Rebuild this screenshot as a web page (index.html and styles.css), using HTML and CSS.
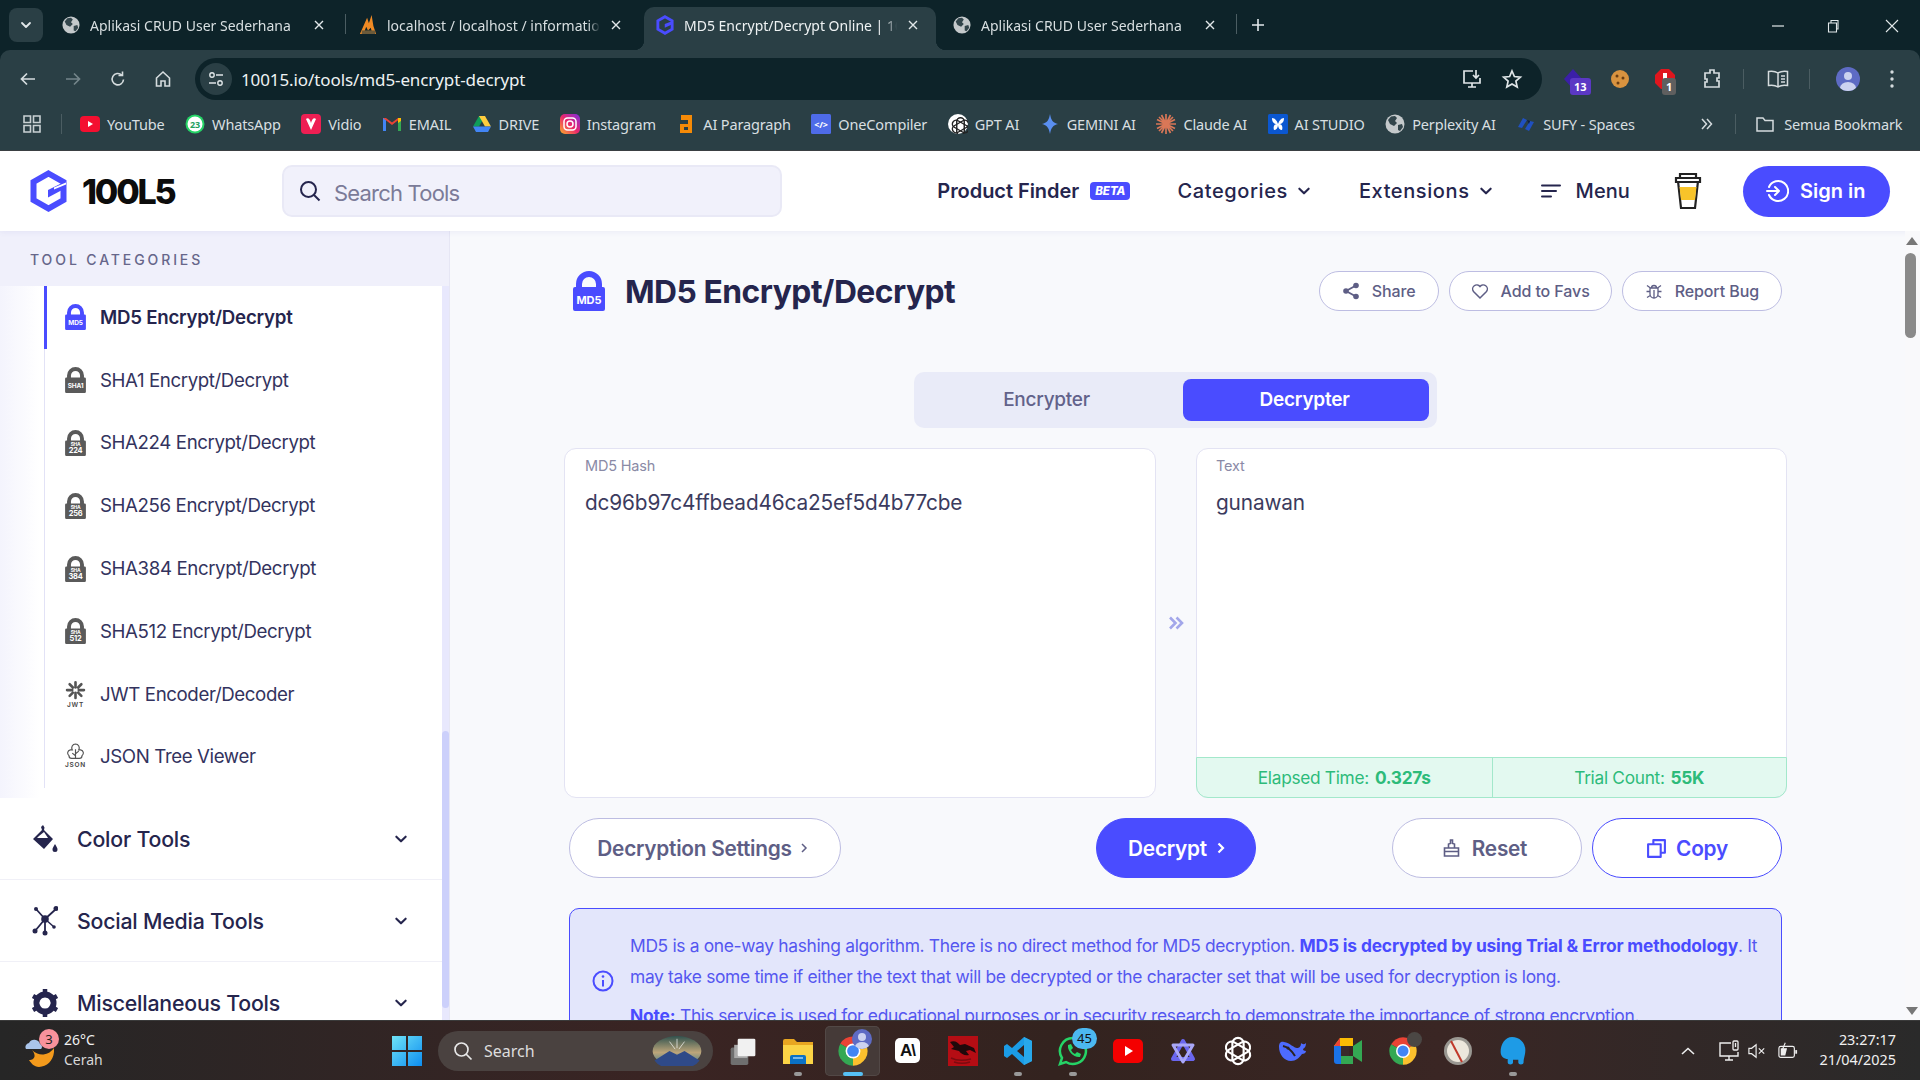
FILE: index.html
```html
<!DOCTYPE html>
<html lang="en">
<head>
<meta charset="utf-8">
<title>MD5 Encrypt/Decrypt Online</title>
<link rel="stylesheet" href="styles.css">
</head>
<body>
<svg class="defs" aria-hidden="true">
  <symbol id="globe" viewBox="0 0 20 20"><circle cx="10" cy="10" r="9.5" fill="#c4c9cb"/><path d="M6 2.5 L10 2 12 4 10 7 12 9 9 12 5 10 3 6z M13 11l4-1 1 3-3 4-2-1z" fill="#32454b"/></symbol>
  <symbol id="chrome" viewBox="0 0 24 24"><path d="M12 12L2.5 6.5A11 11 0 0 1 21.5 6.5z" fill="#ea4335"/><path d="M12 12L21.5 6.5A11 11 0 0 1 12 23z" fill="#fbc02d"/><path d="M12 12L12 23A11 11 0 0 1 2.5 6.5z" fill="#34a853"/><circle cx="12" cy="12" r="5.6" fill="#fff"/><circle cx="12" cy="12" r="4.4" fill="#4285f4"/></symbol>
  <symbol id="knot" viewBox="0 0 24 24"><g fill="none" stroke="currentColor" stroke-width="1.7"><rect x="7.5" y="1.5" width="9" height="21" rx="4.5"/><rect x="7.5" y="1.5" width="9" height="21" rx="4.5" transform="rotate(60 12 12)"/><rect x="7.5" y="1.5" width="9" height="21" rx="4.5" transform="rotate(120 12 12)"/></g></symbol>
  <symbol id="lock" viewBox="0 0 32 40"><path fill-rule="evenodd" d="M0 18V38a2 2 0 0 0 2 2H30a2 2 0 0 0 2-2V18a2 2 0 0 0-2-2H29V13a13 13 0 0 0-26 0V16H2a2 2 0 0 0-2 2zM9 16V13a7 7 0 0 1 14 0V16z"/></symbol>
  <symbol id="chev" viewBox="0 0 12 12"><path d="M2 4l4 4 4-4" fill="none" stroke="currentColor" stroke-width="1.8" stroke-linecap="round" stroke-linejoin="round"/></symbol>
  <symbol id="close" viewBox="0 0 12 12"><path d="M2 2l8 8M10 2l-8 8" fill="none" stroke="currentColor" stroke-width="1.4"/></symbol>
</svg>

<header class="tabstrip">
  <button class="tab-list"><svg class="i12"><use href="#chev"/></svg></button>
  <div class="tab sep"><svg class="fav"><use href="#globe"/></svg><span class="tab-title">Aplikasi CRUD User Sederhana</span><svg class="tab-x"><use href="#close"/></svg></div>
  <div class="tab"><svg class="fav" viewBox="0 0 20 22"><path d="M1 21L9 3l2 6 3-9 2 12 3 9h-4l-2-7-3 3-2-4-3 8z" fill="#f08a24"/><path d="M3 21h15v-4H3z" fill="#6b5a3a"/></svg><span class="tab-title">localhost / localhost / information_schema</span><svg class="tab-x"><use href="#close"/></svg></div>
  <div class="tab active"><svg class="fav" viewBox="0 0 37 42"><path fill="none" stroke="#4a4cff" stroke-width="6" d="M18.5 3.5L33.5 12V30L18.5 38.5 3.5 30V12z"/><path d="M18 19l15-6v7l-15 7z" fill="#4a4cff"/></svg><span class="tab-title">MD5 Encrypt/Decrypt Online | 10015 Tools</span><svg class="tab-x"><use href="#close"/></svg></div>
  <div class="tab sep"><svg class="fav"><use href="#globe"/></svg><span class="tab-title">Aplikasi CRUD User Sederhana</span><svg class="tab-x"><use href="#close"/></svg></div>
  <svg class="new-tab" viewBox="0 0 16 16"><path d="M8 2v12M2 8h12" stroke="#e2e8ea" stroke-width="1.6"/></svg>
  <div class="win-controls">
    <svg viewBox="0 0 14 14"><path d="M1 7h12" stroke="#e2e8ea" stroke-width="1.2"/></svg>
    <svg viewBox="0 0 14 14"><path d="M2.5 4h8v9h-8zM5 4V1.5h7V10h-1.5" fill="none" stroke="#e2e8ea" stroke-width="1.1"/></svg>
    <svg viewBox="0 0 14 14"><path d="M1 1l12 12M13 1L1 13" stroke="#e2e8ea" stroke-width="1.1"/></svg>
  </div>
</header>

<nav class="toolbar">
  <svg class="tb-ic" viewBox="0 0 20 20"><path d="M17 10H4M9 4.5L3.5 10 9 15.5" fill="none" stroke="#d5dcde" stroke-width="1.7"/></svg>
  <svg class="tb-ic" viewBox="0 0 20 20"><path d="M3 10h13M11 4.5l5.5 5.5-5.5 5.5" fill="none" stroke="#74858a" stroke-width="1.7"/></svg>
  <svg class="tb-ic" viewBox="0 0 20 20"><path d="M15.5 10.5a5.7 5.7 0 1 1-1.8-4.5M14.5 2.5v4h-4" fill="none" stroke="#d5dcde" stroke-width="1.6"/></svg>
  <svg class="tb-ic" viewBox="0 0 20 20"><path d="M3.5 9L10 3l6.5 6v8h-4.5v-5h-4v5H3.5z" fill="none" stroke="#d5dcde" stroke-width="1.6"/></svg>
  <div class="omnibox">
    <span class="site-info"><svg viewBox="0 0 18 18"><circle cx="5" cy="5" r="2.2" fill="none" stroke="#dfe5e7" stroke-width="1.4"/><path d="M9 5h7M2 13h7" stroke="#dfe5e7" stroke-width="1.4"/><circle cx="13" cy="13" r="2.2" fill="none" stroke="#dfe5e7" stroke-width="1.4"/></svg></span>
    <span class="url">10015.io/tools/md5-encrypt-decrypt</span>
    <svg class="omni-ic" viewBox="0 0 22 22"><path d="M12 3H3v12h16V10M7 19h8M11 15v4M15 2v8M12 7l3 3 3-3" fill="none" stroke="#dfe5e7" stroke-width="1.7"/></svg>
    <svg class="omni-ic" viewBox="0 0 22 22"><path d="M11 3l2.4 5.5 6 .6-4.5 4 1.3 5.9-5.2-3.1-5.2 3.1 1.3-5.9-4.5-4 6-.6z" fill="none" stroke="#dfe5e7" stroke-width="1.7"/></svg>
  </div>
  <div class="ext ext-a"><svg viewBox="0 0 24 24"><path d="M12 2l9 10-9 10-9-10z" fill="#3b1fa8"/></svg><b class="ext-badge purple">13</b></div>
  <div class="ext ext-b"><svg viewBox="0 0 24 24"><circle cx="12" cy="12" r="9" fill="#d9933f"/><circle cx="9" cy="9" r="1.5" fill="#6b3e12"/><circle cx="15" cy="11" r="1.5" fill="#6b3e12"/><circle cx="10" cy="16" r="1.5" fill="#6b3e12"/></svg></div>
  <div class="ext ext-c"><svg viewBox="0 0 24 24"><path d="M8 2h8l6 6v8l-6 6H8l-6-6V8z" fill="#e0161e"/><path d="M10 6h4v11h-4z" fill="#fff"/></svg><b class="ext-badge grey">1</b></div>
  <div class="ext ext-d"><svg viewBox="0 0 24 24"><path d="M5 6h5V3h4v3h5v5h-2v3h2v6H5v-5h2v-3H5z" fill="none" stroke="#d5dcde" stroke-width="1.7"/></svg></div>
  <i class="tb-sep"></i>
  <div class="ext ext-e"><svg viewBox="0 0 24 24"><path d="M12 6C9 4 6 4 2.5 4.5v14c3.5-.5 6.5-.5 9.5 1.5 3-2 6-2 9.5-1.5v-14C18 4 15 4 12 6zM12 6v14M15 9h4M15 12h4M15 15h4" fill="none" stroke="#d5dcde" stroke-width="1.5"/></svg></div>
  <i class="tb-sep"></i>
  <span class="avatar"><i class="av-head"></i><i class="av-body"></i></span>
  <svg class="kebab" viewBox="0 0 4 18"><circle cx="2" cy="2" r="1.7" fill="#d5dcde"/><circle cx="2" cy="9" r="1.7" fill="#d5dcde"/><circle cx="2" cy="16" r="1.7" fill="#d5dcde"/></svg>
</nav>

<div class="bookmarks">
  <svg class="apps" viewBox="0 0 18 18"><path d="M1 1h6.5v6.5H1zM10.5 1H17v6.5h-6.5zM1 10.5h6.5V17H1zM10.5 10.5H17V17h-6.5z" fill="none" stroke="#c9d1d3" stroke-width="1.6"/></svg>
  <i class="bm-sep"></i>
  <a class="bm"><svg viewBox="0 0 20 20"><rect y="2" width="20" height="16" rx="4" fill="#f40f30"/><path d="M8 7l5 3-5 3z" fill="#fff"/></svg>YouTube</a>
  <a class="bm"><svg viewBox="0 0 20 20"><circle cx="10" cy="10" r="9.5" fill="#25d366"/><circle cx="10" cy="10" r="7.5" fill="#fff"/><text x="10" y="13.5" class="fav-text green">23</text></svg>WhatsApp</a>
  <a class="bm"><svg viewBox="0 0 20 20"><rect y="0" width="20" height="20" rx="4" fill="#ee1f53"/><path d="M5 5l5 11 5-11c-2-2-4 0-5 4-1-4-3-6-5-4z" fill="#fff"/></svg>Vidio</a>
  <a class="bm"><svg viewBox="0 0 20 20"><path d="M1 4h3v13H1z" fill="#4285f4"/><path d="M16 4h3v13h-3z" fill="#34a853"/><path d="M1 4l9 7 9-7-3 0-6 4.5L4 4z" fill="#ea4335"/><path d="M16 4h3v3l-3 2z" fill="#fbbc04"/></svg>EMAIL</a>
  <a class="bm"><svg viewBox="0 0 20 20"><path d="M7 2h6l-6 10.5H1z" fill="#0f9d58"/><path d="M7 2h6l6 10.5h-6z" fill="#ffcd3e"/><path d="M1 12.5h18L16 18H4z" fill="#4285f4"/></svg>DRIVE</a>
  <a class="bm"><svg viewBox="0 0 20 20"><defs><linearGradient id="ig" x1="0" y1="1" x2="1" y2="0"><stop offset="0" stop-color="#fdb02a"/><stop offset=".5" stop-color="#e9266d"/><stop offset="1" stop-color="#7d2fe0"/></linearGradient></defs><rect width="20" height="20" rx="5" fill="url(#ig)"/><rect x="4" y="4" width="12" height="12" rx="3.5" fill="none" stroke="#fff" stroke-width="1.5"/><circle cx="10" cy="10" r="3" fill="none" stroke="#fff" stroke-width="1.5"/></svg>Instagram</a>
  <a class="bm"><svg viewBox="0 0 20 20"><path d="M5 1h11v18H4v-9h8V6H5zM8 13v3h4v-3z" fill="#f58a07" fill-rule="evenodd"/></svg>AI Paragraph</a>
  <a class="bm"><svg viewBox="0 0 20 20"><rect width="20" height="20" rx="1.5" fill="#4e6be8"/><text x="10" y="14" class="fav-text white">&lt;/&gt;</text></svg>OneCompiler</a>
  <a class="bm"><svg viewBox="0 0 20 20"><circle cx="10" cy="10" r="10" fill="#fff"/><svg x="2.5" y="2.5" width="15" height="15" class="ink"><use href="#knot"/></svg></svg>GPT AI</a>
  <a class="bm"><svg viewBox="0 0 20 20"><path d="M10 0c1 6 3 9 8 10-5 1-7 4-8 10-1-6-3-9-8-10 5-1 7-4 8-10z" fill="#5a8ff0"/></svg>GEMINI AI</a>
  <a class="bm"><svg viewBox="0 0 20 20"><path d="M10 0v20M0 10h20M3 3l14 14M17 3L3 17M5.5 1l9 18M14.5 1l-9 18M1 5.5l18 9M19 5.5l-18 9" stroke="#d97757" stroke-width="1.7"/></svg>Claude AI</a>
  <a class="bm"><svg viewBox="0 0 20 20"><rect width="20" height="20" rx="1.5" fill="#0b57d0"/><path d="M4 4c3 0 5 3 6 6 1-3 3-6 6-6 0 4-2 6-5 6 3 0 4 3 3 6-2 0-4-2-4-5 0 3-2 5-4 5-1-3 0-6 3-6-3 0-5-2-5-6z" fill="#fff"/></svg>AI STUDIO</a>
  <a class="bm"><svg><use href="#globe"/></svg>Perplexity AI</a>
  <a class="bm"><svg viewBox="0 0 20 20"><path d="M2 13l5-9 4 2-5 8zM18 8l-5 9-4-2 5-8z" fill="#2050c0"/><path d="M11 6l3 1-1 3z" fill="#0d1d46"/></svg>SUFY - Spaces</a>
  <svg class="bm-more" viewBox="0 0 14 14"><path d="M3 2l4.5 5L3 12M8 2l4.5 5L8 12" fill="none" stroke="#d5dcde" stroke-width="1.5"/></svg>
  <i class="bm-sep right"></i>
  <a class="bm all"><svg viewBox="0 0 20 20"><path d="M2 4h6l2 2.5h8V17H2z" fill="none" stroke="#d5dcde" stroke-width="1.5"/></svg>Semua Bookmark</a>
</div>

<div class="site">
  <header class="site-header">
    <a class="logo"><svg viewBox="0 0 37 42"><path fill="none" stroke="#4a4cff" stroke-width="6" d="M18.5 3.5L33.5 12V30L18.5 38.5 3.5 30V12z"/><path d="M18 20l13-6.5 2 6-15 8z" fill="#4a4cff"/><path d="M24 17.5l12-5v2l-12 5z" fill="#fff"/></svg><span>100L5</span></a>
    <label class="search"><svg viewBox="0 0 22 22"><circle cx="9.5" cy="9.5" r="7.5" fill="none" stroke="#25254d" stroke-width="2"/><path d="M15 15l5.5 5.5" stroke="#25254d" stroke-width="2"/></svg><span>Search Tools</span></label>
    <div class="nav">
      <a class="nav-link tight">Product Finder <b class="beta">BETA</b></a>
      <a class="nav-link">Categories <svg class="i14"><use href="#chev"/></svg></a>
      <a class="nav-link">Extensions <svg class="i14"><use href="#chev"/></svg></a>
      <a class="nav-link menu"><svg class="menu-ic" viewBox="0 0 20 14"><path d="M1 1.5h18M1 7h14M1 12.5h9" stroke="#25254d" stroke-width="2" stroke-linecap="round"/></svg>Menu</a>
      <svg class="cup" viewBox="0 0 28 36"><path d="M4 8h20l-3 27H7z" fill="#fff" stroke="#222" stroke-width="2.2"/><path d="M5.5 14h17l-1.5 13H7z" fill="#f8c42a"/><path d="M2 5h24v4H2zM6 1h16v4H6z" fill="#fff" stroke="#222" stroke-width="2.2"/></svg>
      <a class="signin"><svg viewBox="0 0 24 24"><path d="M4 8a10 10 0 1 1 0 8M2 12h12M10 8l4 4-4 4" fill="none" stroke="#fff" stroke-width="2" stroke-linecap="round" stroke-linejoin="round"/></svg>Sign in</a>
    </div>
  </header>

  <div class="site-body">
    <aside class="sidebar">
      <div class="side-head">TOOL CATEGORIES</div>
      <div class="side-body">
        <div class="side-col">
          <ul class="tool-list">
            <li class="tool active"><svg class="lock blue" viewBox="0 0 32 40"><use href="#lock"/><text x="16" y="33" class="lk lk-one">MD5</text></svg>MD5 Encrypt/Decrypt</li>
            <li class="tool"><svg class="lock" viewBox="0 0 32 40"><use href="#lock"/><text x="16" y="33" class="lk lk-one">SHA1</text></svg>SHA1 Encrypt/Decrypt</li>
            <li class="tool"><svg class="lock" viewBox="0 0 32 40"><use href="#lock"/><text x="16" y="25" class="lk lk-sm">SHA</text><text x="16" y="36" class="lk lk-num">224</text></svg>SHA224 Encrypt/Decrypt</li>
            <li class="tool"><svg class="lock" viewBox="0 0 32 40"><use href="#lock"/><text x="16" y="25" class="lk lk-sm">SHA</text><text x="16" y="36" class="lk lk-num">256</text></svg>SHA256 Encrypt/Decrypt</li>
            <li class="tool"><svg class="lock" viewBox="0 0 32 40"><use href="#lock"/><text x="16" y="25" class="lk lk-sm">SHA</text><text x="16" y="36" class="lk lk-num">384</text></svg>SHA384 Encrypt/Decrypt</li>
            <li class="tool"><svg class="lock" viewBox="0 0 32 40"><use href="#lock"/><text x="16" y="25" class="lk lk-sm">SHA</text><text x="16" y="36" class="lk lk-num">512</text></svg>SHA512 Encrypt/Decrypt</li>
            <li class="tool"><svg class="lock" viewBox="0 0 32 40"><g stroke="#555" stroke-width="4" stroke-linecap="round"><path d="M16 2v8M16 18v8M3 14h8M21 14h8M7 5l5 5M20 18l5 5M25 5l-5 5M12 18l-5 5"/></g><text x="16" y="40" class="lk-jwt">JWT</text></svg>JWT Encoder/Decoder</li>
            <li class="tool"><svg class="lock" viewBox="0 0 32 40"><path d="M16 0a6 6 0 0 1 5 9h3a5 5 0 0 1 2 9 4 4 0 0 1-4 4H10a4 4 0 0 1-4-4 5 5 0 0 1 2-9h3a6 6 0 0 1 5-9zM16 8v14M16 15l5-4M16 18l-5-4" fill="none" stroke="#555" stroke-width="1.8"/><text x="16" y="36" class="lk-jwt">JSON</text></svg>JSON Tree Viewer</li>
          </ul>
          <div class="cat"><svg viewBox="0 0 26 30"><path d="M11 1l1.5 2.5L12 6l9 9-9 10-11-10 9-9-1-3z" fill="#25254d"/><path d="M5 14h14l-3 0-4-6-5 4z" fill="#fff"/><path d="M23 20c1.5 2.5 2.5 4 2.5 5.5a2.5 2.5 0 0 1-5 0c0-1.5 1-3 2.5-5.5z" fill="#25254d"/></svg><span>Color Tools</span><svg class="i14"><use href="#chev"/></svg></div>
          <div class="cat"><svg viewBox="0 0 26 30"><g stroke="#25254d" stroke-width="1.8"><path d="M13 13L4 3M13 13L24 3M13 13L3 25M13 13L13 26"/></g><circle cx="13" cy="13" r="3.8" fill="#25254d"/><circle cx="4" cy="3" r="2" fill="#25254d"/><circle cx="24" cy="2.5" r="2.5" fill="#25254d"/><circle cx="3" cy="25" r="2.5" fill="#25254d"/><circle cx="13" cy="27" r="2.5" fill="#25254d"/><circle cx="22" cy="21" r="1.8" fill="#25254d"/><path d="M13 13L22 21" stroke="#25254d" stroke-width="1.5"/></svg><span>Social Media Tools</span><svg class="i14"><use href="#chev"/></svg></div>
          <div class="cat"><svg viewBox="0 0 26 30"><circle cx="13" cy="15" r="8.5" fill="none" stroke="#25254d" stroke-width="6"/><path d="M13 1v28M1 8l24 14M25 8L1 22" stroke="#25254d" stroke-width="4.5"/><circle cx="13" cy="15" r="5.5" fill="#fff"/></svg><span>Miscellaneous Tools</span><svg class="i14"><use href="#chev"/></svg></div>
        </div>
        <div class="side-track"><i class="side-thumb"></i></div>
      </div>
    </aside>

    <main class="main">
      <div class="title-row">
        <svg class="title-lock" viewBox="0 0 32 40"><use href="#lock"/><text x="16" y="33" class="lk lk-one">MD5</text></svg>
        <h1>MD5 Encrypt/Decrypt</h1>
        <div class="title-actions">
          <a class="pill"><svg viewBox="0 0 18 18"><path d="M14 3.5L4 9l10 5.5" fill="none" stroke="#5e5e85" stroke-width="1.8"/><circle cx="14" cy="3.5" r="2.8" fill="#5e5e85"/><circle cx="4" cy="9" r="2.8" fill="#5e5e85"/><circle cx="14" cy="14.5" r="2.8" fill="#5e5e85"/></svg>Share</a>
          <a class="pill"><svg viewBox="0 0 18 18"><path d="M9 16L2.5 9.5a4 4 0 0 1 6.5-5 4 4 0 0 1 6.5 5z" fill="none" stroke="#5e5e85" stroke-width="1.5"/></svg>Add to Favs</a>
          <a class="pill"><svg viewBox="0 0 18 18"><path d="M5 6h8v6a4 4 0 0 1-8 0zM6.5 6a2.5 2.5 0 0 1 5 0M9 8v8M1.5 9.5H5M13 9.5h3.5M2 3.5L5.5 6M16 3.5L12.5 6M2 15.5l3.3-2M16 15.5l-3.3-2" fill="none" stroke="#5e5e85" stroke-width="1.3"/></svg>Report Bug</a>
        </div>
      </div>

      <div class="mode-wrap"><div class="mode"><span class="off">Encrypter</span><span class="on">Decrypter</span></div></div>

      <div class="panes">
        <section class="pane">
          <label>MD5 Hash</label>
          <p>dc96b97c4ffbead46ca25ef5d4b77cbe</p>
        </section>
        <svg class="pane-arrow" viewBox="0 0 16 14"><path d="M2 1.5L7.5 7 2 12.5M8.5 1.5L14 7 8.5 12.5" fill="none" stroke="#a3a7ea" stroke-width="2.6"/></svg>
        <section class="pane result">
          <label>Text</label>
          <p>gunawan</p>
          <div class="stats"><span>Elapsed Time: <b>0.327s</b></span><span>Trial Count: <b>55K</b></span></div>
        </section>
      </div>

      <div class="actions">
        <div class="a-left"><a class="btn settings">Decryption Settings<svg viewBox="0 0 8 12"><path d="M2 2l4 4-4 4" fill="none" stroke="currentColor" stroke-width="1.5"/></svg></a></div>
        <a class="btn primary">Decrypt<svg viewBox="0 0 8 12"><path d="M1.5 1.5L6 6l-4.5 4.5" fill="none" stroke="currentColor" stroke-width="2.2"/></svg></a>
        <div class="a-right">
          <a class="btn wide reset"><svg class="b-ic" viewBox="0 0 18 20"><path d="M2 10h14v8H2zM2 13.5h14M6 10V6l2-.5V2h2v3.5l2 .5v4" fill="none" stroke="currentColor" stroke-width="1.6"/></svg>Reset</a>
          <a class="btn wide blue"><svg class="b-ic" viewBox="0 0 20 20"><path d="M7 6V2h11v12h-4M2 6h12v12H2z" fill="none" stroke="currentColor" stroke-width="2" stroke-linejoin="round"/></svg>Copy</a>
        </div>
      </div>

      <div class="info">
        <svg class="info-ic" viewBox="0 0 22 22"><circle cx="11" cy="11" r="9.5" fill="none" stroke="#4a4cff" stroke-width="2"/><path d="M11 10v6.5" stroke="#4a4cff" stroke-width="2"/><circle cx="11" cy="6.5" r="1.3" fill="#4a4cff"/></svg>
        <div class="info-text">
          <p>MD5 is a one-way hashing algorithm. There is no direct method for MD5 decryption. <b>MD5 is decrypted by using Trial &amp; Error methodology</b>. It may take some time if either the text that will be decrypted or the character set that will be used for decryption is long.</p>
          <p class="note"><b>Note:</b> This service is used for educational purposes or in security research to demonstrate the importance of strong encryption.</p>
        </div>
      </div>
    </main>

    <div class="page-scroll"><i class="up"></i><i class="thumb"></i><i class="down"></i></div>
  </div>
</div>

<footer class="taskbar">
  <div class="weather">
    <svg class="w-ic" viewBox="0 0 30 36"><path d="M8 17a14 14 0 0 0 22-2c1 11-6 19-15 19C10 34 7 30 5 27c5 0 8-4 3-10z" fill="#f39a1c"/><path d="M2 16a4 4 0 0 1 3-6 6 6 0 0 1 11 1 3 3 0 0 1 1 5z" fill="#a9c4ea"/></svg>
    <b class="w-badge">3</b>
    <div class="w-text"><span>26°C</span><span>Cerah</span></div>
  </div>
  <svg class="start" viewBox="0 0 30 30"><defs><linearGradient id="win" x1="0" y1="0" x2="1" y2="1"><stop offset="0" stop-color="#6fe3f7"/><stop offset="1" stop-color="#0d8df0"/></linearGradient></defs><path d="M0 0h14v14H0zM16 0h14v14H16zM0 16h14v14H0zM16 16h14v14H16z" fill="url(#win)"/></svg>
  <div class="tb-search">
    <svg viewBox="0 0 20 20"><circle cx="8.5" cy="8.5" r="6.5" fill="none" stroke="#e8e8e8" stroke-width="1.7"/><path d="M13 13l5.5 5.5" stroke="#e8e8e8" stroke-width="1.7"/></svg>
    <span>Search</span>
    <svg class="bing" viewBox="0 0 52 32"><defs><linearGradient id="sky" x1="0" y1="0" x2="0" y2="1"><stop offset="0" stop-color="#31524e"/><stop offset=".55" stop-color="#bca57a"/><stop offset="1" stop-color="#3c7d8c"/></linearGradient></defs><ellipse cx="26" cy="16" rx="26" ry="16" fill="url(#sky)"/><path d="M2 26l16-10 8 4 8-4 16 10a26 16 0 0 1-48 0z" fill="#2f4a88"/><path d="M26 3v10M18 6l6 8M34 6l-6 8" stroke="#fff" stroke-width="1" opacity=".7"/></svg>
  </div>
  <div class="apps-row">
    <span class="app"><svg viewBox="0 0 30 34"><rect x="1" y="13" width="20" height="20" rx="2" fill="#6f6f6f"/><rect x="5" y="10" width="15" height="15" fill="#aaa"/><rect x="9" y="3" width="20" height="20" rx="1.5" fill="#f1f1f1"/></svg></span>
    <span class="app dot"><svg viewBox="0 0 30 30"><path d="M0 5a2 2 0 0 1 2-2h9l3 3h16v22H0z" fill="#e8a621"/><path d="M0 9h30v19H0z" fill="#fbd446"/><path d="M9 19h12a2 2 0 0 1 2 2v7H7v-7a2 2 0 0 1 2-2z" fill="#0b72c5"/><path d="M10 22h10" stroke="#9fd2f5" stroke-width="1.5"/></svg></span>
    <span class="app active-app dot-blue"><svg viewBox="0 0 24 24"><use href="#chrome"/></svg><span class="over-av"><i></i><i></i></span></span>
    <span class="app"><span class="anth">A\</span></span>
    <span class="app"><svg viewBox="0 0 30 30"><rect width="30" height="30" fill="#b50d14"/><path d="M2 6c5-2 8 1 10 3l5-1 9 4 2 5-6-3-4 1 3 4c-4 1-8-1-10-4L3 13l3-2z" fill="#20090b"/><path d="M3 22c6 3 12 3 20 1M6 26c6 2 10 2 16 0" stroke="#7c0b10" stroke-width="1.5" fill="none"/></svg></span>
    <span class="app dot"><svg viewBox="0 0 30 30"><path d="M21 1l8 4v20l-8 4-12-11-5 4-3-2V10l3-2 5 4zM21 9l-7 6 7 6z" fill="#1b9ce6" fill-rule="evenodd"/><path d="M21 1l8 4v20l-8 4z" fill="#28a8ea"/></svg></span>
    <span class="app dot"><svg viewBox="0 0 30 30"><path d="M15 2a13 13 0 1 1-7 24l-6 2 2-6A13 13 0 0 1 15 2z" fill="none" stroke="#25d366" stroke-width="2.5"/><path d="M10 9l3-1 2 4-2 2c1 2 2 3 4 4l2-2 4 2-1 3c-6 1-13-6-12-12z" fill="#25d366"/></svg><b class="app-badge">45</b></span>
    <span class="app"><svg viewBox="0 0 30 24"><rect width="30" height="24" rx="5" fill="#f40000"/><path d="M12 7l8 5-8 5z" fill="#fff"/></svg></span>
    <span class="app"><svg viewBox="0 0 30 30"><path d="M15 5l10 18H5z" fill="none" stroke="#6a66ee" stroke-width="4" stroke-linejoin="round"/><path d="M15 26L5 9h20z" fill="none" stroke="#a9a7f7" stroke-width="3" stroke-linejoin="round"/></svg></span>
    <span class="app knot"><svg viewBox="0 0 24 24"><use href="#knot"/></svg></span>
    <span class="app"><svg viewBox="0 0 30 26"><path d="M28 5c-2 2-4 1-5 0 0 4-2 5-4 5-3 0-7-5-13-6C2 3 1 6 1 9c0 7 5 14 12 14 5 0 8-3 11-7 2 0 4-1 4-3-2 0-3-1-3-2 2-1 3-3 3-6z" fill="#4d6bfe"/><circle cx="10" cy="10" r="1.5" fill="#2a2222"/><path d="M5 8c5 1 9 5 12 10" stroke="#2a2222" stroke-width="2" fill="none"/></svg></span>
    <span class="app"><svg viewBox="0 0 30 28"><path d="M7 1h13v8H1z" fill="#fbbc04"/><path d="M1 9h7v10H1z" fill="#1a73e8"/><path d="M1 19h7v8H4a3 3 0 0 1-3-3z" fill="#1a73e8"/><path d="M8 19h12v8H8z" fill="#34a853"/><path d="M20 1v8h-7V1z" fill="#fbbc04"/><path d="M7 1v8H1z" fill="#ea4335"/><path d="M20 9l9-6v22l-9-6z" fill="#34a853"/><path d="M8 9h8v10H8z" fill="#3a2a2a"/></svg></span>
    <span class="app"><svg viewBox="0 0 24 24"><use href="#chrome"/></svg><span class="over-dark"></span></span>
    <span class="app"><svg viewBox="0 0 30 30"><circle cx="15" cy="15" r="14" fill="#9a9892"/><circle cx="15" cy="15" r="11" fill="#ece7dc"/><path d="M8 5l11 21" stroke="#c0392b" stroke-width="2"/></svg></span>
    <span class="app dot"><svg viewBox="0 0 30 34"><path d="M14 1c8 0 15 6 15 15 0 6-2 9-2 14 0 3-6 3-6 0v-3h-6v3c0 3-6 3-6 0v-4c-4 0-8-3-8-8C1 9 6 1 14 1z" fill="#1e9be6"/></svg></span>
  </div>
  <div class="tray">
    <svg class="tray-chev" viewBox="0 0 14 8"><path d="M1 7l6-5.5L13 7" fill="none" stroke="#eee" stroke-width="1.6"/></svg>
    <svg class="tray-net" viewBox="0 0 20 22"><path d="M12 3H1v13h18v-4M6 20h8M10 16v4" fill="none" stroke="#eee" stroke-width="1.4"/><rect x="14" y="1" width="5" height="9" rx="1" fill="none" stroke="#eee" stroke-width="1.3"/><path d="M16.5 3v4" stroke="#eee" stroke-width="1.3"/></svg>
    <svg class="tray-vol" viewBox="0 0 20 18"><path d="M1 6v6h3l5 4V2L4 6z" fill="none" stroke="#eee" stroke-width="1.3"/><path d="M12 6l6 6M18 6l-6 6" stroke="#eee" stroke-width="1.3"/></svg>
    <svg class="tray-bat" viewBox="0 0 22 18"><rect x="1" y="4" width="17" height="12" rx="2" fill="none" stroke="#eee" stroke-width="1.3"/><path d="M3 6h7l-2 8H3z" fill="#eee"/><path d="M20 8v4" stroke="#eee" stroke-width="2"/><path d="M8 0L5 7h3l-2 5" fill="none" stroke="#eee" stroke-width="1.2"/></svg>
    <div class="clock"><span>23:27:17</span><span>21/04/2025</span></div>
  </div>
</footer>
</body>
</html>
```
FILE: styles.css
```css
* { box-sizing: border-box; }
html, body { margin: 0; height: 100%; }
body { display: flex; flex-direction: column; height: 100vh; overflow: hidden; font-family: "Noto Sans", sans-serif; background: #0d2329; }
a { color: inherit; text-decoration: none; }
ul { list-style: none; margin: 0; padding: 0; }
p, h1 { margin: 0; }
i { display: block; }
.defs { position: absolute; width: 0; height: 0; }

/* browser: tabs */
.tabstrip { display: flex; align-items: flex-end; height: 50px; flex: none; padding-left: 9px; background: #0d2329; color: #d8dfe1; font-size: 14px; }
.tab-list { width: 34px; height: 34px; margin: 0 7px 8px 0; border: 0; border-radius: 8px; background: #2a3f45; color: #e2e8ea; display: flex; align-items: center; justify-content: center; padding: 0; }
.i12 { width: 12px; height: 12px; }
.i14 { width: 14px; height: 14px; flex: none; }
.tab { position: relative; display: flex; align-items: center; width: 292px; height: 43px; margin-right: 5px; padding: 0 17px 7px 12px; border-radius: 10px 10px 0 0; }
.tab.active { background: #2a3f45; color: #eef2f3; }
.tab.active::before, .tab.active::after { content: ""; position: absolute; bottom: 0; width: 10px; height: 10px; }
.tab.active::before { left: -10px; background: radial-gradient(circle at 0 0, transparent 10px, #2a3f45 10.5px); }
.tab.active::after { right: -10px; background: radial-gradient(circle at 100% 0, transparent 10px, #2a3f45 10.5px); }
.tab.sep::after { content: ""; position: absolute; right: -4px; top: 7px; height: 20px; width: 1px; background: #4b5d62; }
.fav { width: 18px; height: 20px; flex: none; margin-right: 10px; }
.tab-title { flex: 1; min-width: 0; white-space: nowrap; overflow: hidden; margin-right: 10px; -webkit-mask-image: linear-gradient(to left, transparent, #000 12px); mask-image: linear-gradient(to left, transparent, #000 12px); }
.tab-x { width: 12px; height: 12px; flex: none; color: #e2e8ea; }
.new-tab { width: 16px; height: 16px; margin: 0 0 17px 12px; }
.win-controls { margin-left: auto; display: flex; gap: 41px; padding: 0 21px 17px 0; }
.win-controls svg { width: 14px; height: 14px; }
.win-controls svg:last-child { margin-left: 4px; }

/* browser: toolbar */
.toolbar { display: flex; align-items: center; height: 50px; flex: none; background: #2a3f45; border-radius: 10px 10px 0 0; padding: 7px 0 0 18px; color: #e8edef; }
.tb-ic { width: 20px; height: 20px; margin-right: 25px; flex: none; }
.omnibox { display: flex; align-items: center; width: 1347px; height: 42px; margin: 1px 0 0 -3px; background: #0d2329; border-radius: 21px; padding: 0 19px 0 5px; }
.site-info { display: flex; align-items: center; justify-content: center; width: 32px; height: 32px; border-radius: 50%; background: #2a3f45; }
.site-info svg { width: 18px; height: 18px; }
.url { margin-left: 9px; font-size: 17px; flex: 1; color: #eef2f3; letter-spacing: -.1px; }
.omni-ic { width: 22px; height: 22px; margin-left: 18px; flex: none; }
.ext { position: relative; width: 24px; height: 24px; flex: none; }
.ext svg { width: 100%; height: 100%; }
.ext-a { margin-left: 19px; }
.ext-b { margin-left: 23px; }
.ext-c { margin-left: 21px; }
.ext-d { margin-left: 23px; }
.ext-e { margin-left: 22px; }
.ext-badge { position: absolute; left: 9px; top: 11px; height: 17px; padding: 0 4px; border-radius: 3px; color: #fff; font-size: 11px; line-height: 17px; }
.ext-badge.purple { background: #5b38c4; }
.ext-badge.grey { background: #5f5f5f; }
.tb-sep { width: 1px; height: 20px; background: #4b5d62; margin-left: 19px; flex: none; }
.avatar { position: relative; width: 24px; height: 24px; margin-left: 26px; border-radius: 50%; background: #5e6bc4; overflow: hidden; flex: none; }
.av-head { position: absolute; left: 8px; top: 5px; width: 8px; height: 8px; border-radius: 50%; background: #ccd2f0; }
.av-body { position: absolute; left: 4px; top: 15px; width: 16px; height: 12px; border-radius: 50%; background: #ccd2f0; }
.kebab { width: 4px; height: 18px; margin-left: 30px; flex: none; }

/* browser: bookmarks */
.bookmarks { display: flex; align-items: center; height: 51px; flex: none; background: #2a3f45; padding: 0 0 3px 23px; color: #d8dfe1; font-size: 14.5px; border-bottom: 1px solid #3a3f42; }
.apps { width: 18px; height: 18px; margin-right: 20px; flex: none; }
.bm-sep { width: 1px; height: 20px; background: #4b5d62; margin-right: 18px; flex: none; }
.bm-sep.right { margin: 0 19px 0 22px; }
.bm { display: flex; align-items: center; gap: 7px; margin-right: 20.5px; white-space: nowrap; letter-spacing: -.15px; }
.bm svg { width: 20px; height: 20px; flex: none; }
.bm.all { margin: 0; gap: 9px; letter-spacing: -.2px; }
.bm-more { width: 14px; height: 14px; margin-left: 44px; flex: none; }
.fav-text { font: 700 9px "Noto Sans", sans-serif; text-anchor: middle; }
.fav-text.green { fill: #25a060; }
.fav-text.white { fill: #fff; }
.ink { color: #222; }

/* site */
.site { flex: 1; min-height: 0; display: flex; flex-direction: column; overflow: hidden; background: #f8f9fc; font-family: Inter, sans-serif; color: #25254d; }
.site-header { display: flex; align-items: center; height: 80px; flex: none; background: #fff; padding: 0 30px; position: relative; box-shadow: 0 1px 6px rgba(80, 80, 180, .08); }
.logo { display: flex; align-items: center; gap: 15px; width: 252px; flex: none; font-size: 34px; font-weight: 800; color: #0c0c0c; letter-spacing: -2.2px; }
.logo svg { width: 37px; height: 42px; }
.search { display: flex; align-items: center; width: 500px; height: 52px; padding-left: 15px; background: #f1f1fb; border: 2px solid #e9e9f6; border-radius: 10px; color: #7b7b98; font-size: 22px; flex: none; letter-spacing: -.8px; }
.search svg { width: 22px; height: 22px; margin-right: 13px; }
.search span { margin-top: 3px; }
.nav { flex: 1; display: flex; align-items: center; justify-content: flex-end; gap: 48px; }
.nav-link { display: flex; align-items: center; gap: 9px; font-size: 20px; font-weight: 500; white-space: nowrap; letter-spacing: .6px; }
.nav-link.tight { font-weight: 600; letter-spacing: -.05px; gap: 11px; margin-right: -1px; }
.beta { background: #4a4cff; color: #fff; font-size: 11.5px; font-weight: 800; padding: 2px 5px; border-radius: 4px; font-style: italic; letter-spacing: 0; }
.menu { gap: 15px; letter-spacing: .1px; }
.menu-ic { width: 20px; height: 14px; }
.cup { width: 28px; height: 36px; flex: none; margin-left: -4px; }
.signin { display: flex; align-items: center; gap: 11px; width: 147px; height: 51px; padding-left: 22px; margin-left: -7px; background: #4a4cff; color: #fff; border-radius: 26px; font-size: 20px; font-weight: 600; }
.signin svg { width: 24px; height: 24px; flex: none; }
.site-body { flex: 1; min-height: 0; display: flex; overflow: hidden; }

/* sidebar */
.sidebar { width: 450px; flex: none; display: flex; flex-direction: column; border-right: 1px solid #e6e6f4; background: #fff; }
.side-head { height: 55px; flex: none; padding: 20px 0 0 30px; background: #f0f0fb; font-size: 14px; font-weight: 500; letter-spacing: 2.9px; color: #66668a; }
.side-body { flex: 1; min-height: 0; display: flex; }
.side-col { flex: 1; min-width: 0; overflow: hidden; }
.side-track { width: 7px; flex: none; background: #e8e8fd; padding-top: 445px; }
.side-thumb { height: 277px; border-radius: 4px; background: #ccd0fb; }
.tool-list { height: 512px; padding-bottom: 9px; background: linear-gradient(to right, #f4f4fd, #fff 40px); }
.tool { position: relative; display: flex; align-items: center; gap: 14px; height: 62.8px; margin-left: 44px; padding-left: 20px; border-left: 1px solid #e2e2f6; font-size: 18.7px; color: #33335e; letter-spacing: -.4px; background: #fff; }
.tool.active { font-weight: 600; color: #25254d; letter-spacing: -.25px; }
.tool.active::before { content: ""; position: absolute; left: -1px; top: 0; bottom: 0; width: 3px; background: #4a4cff; }
.lock { width: 21px; height: 26px; flex: none; fill: #5a5a5a; overflow: visible; }
.lock.blue { fill: #4a4cff; }
.lk { fill: #fff; text-anchor: middle; font-family: Inter, sans-serif; font-weight: 700; }
.lk-one { font-size: 10px; }
.lk-sm { font-size: 7.5px; }
.lk-num { font-size: 11.5px; }
.lk-jwt { fill: #444; text-anchor: middle; font-size: 10px; font-family: Inter, sans-serif; letter-spacing: 1.2px; font-weight: 600; }
.cat { display: flex; align-items: center; height: 82px; padding: 0 34px 0 32px; border-bottom: 1px solid #f0f0f7; background: #fff; font-size: 21.3px; font-weight: 500; color: #25254d; letter-spacing: -.2px; }
.cat > svg:first-child { width: 26px; height: 30px; flex: none; margin-right: 19px; }
.cat span { flex: 1; }

/* main */
.main { flex: 1; min-width: 0; padding: 40px 123px 0 119px; }
.title-row { display: flex; align-items: center; height: 40px; padding-left: 4px; }
.title-lock { width: 32px; height: 40px; fill: #4a4cff; flex: none; margin-right: 20px; }
.title-lock .lk-one { font-size: 11px; }
h1 { font-size: 31.8px; font-weight: 700; color: #25254d; letter-spacing: -.5px; white-space: nowrap; }
.title-actions { margin-left: auto; display: flex; gap: 10px; }
.pill { display: flex; align-items: center; justify-content: center; gap: 12px; height: 40px; padding: 0 22px; background: #fff; border: 1px solid #bdbde2; border-radius: 20px; color: #5e5e85; font-size: 16px; font-weight: 500; letter-spacing: -.1px; white-space: nowrap; }
.pill:nth-child(2) { padding: 0 21px; }
.pill svg { width: 18px; height: 18px; flex: none; }
.mode-wrap { display: flex; justify-content: center; margin-top: 61px; }
.mode { display: grid; grid-template-columns: 261px 246px; align-items: center; width: 523px; height: 56px; padding: 7px 8px; background: #e9ebf8; border-radius: 10px; font-size: 19px; font-weight: 500; color: #62628a; text-align: center; letter-spacing: -.25px; }
.mode span { line-height: 42px; }
.mode .off { padding-right: 12px; }
.mode .on { background: #4a4cff; color: #fff; border-radius: 8px; font-weight: 600; padding-right: 3px; }
.panes { display: flex; align-items: center; height: 350px; margin: 20px -5px 0; }
.pane { position: relative; width: 592px; height: 100%; background: #fff; border: 1px solid #e3e3f3; border-radius: 12px; padding: 8px 20px; flex: none; }
.pane label { display: block; font-size: 14.5px; color: #8a8aa6; line-height: 18px; letter-spacing: -.2px; }
.pane p { margin-top: 15px; font-size: 20.8px; color: #3b3b5e; line-height: 26px; letter-spacing: -.15px; }
.pane-arrow { width: 16px; height: 14px; margin: 0 12px; flex: none; }
.pane.result { width: 591px; padding-left: 19px; }
.stats { position: absolute; left: -1px; right: -1px; bottom: -1px; height: 41px; display: grid; grid-template-columns: 1fr 1fr; background: #e3f9f0; border: 1px solid #a3e8cb; border-radius: 0 0 12px 12px; color: #2dbb7a; font-size: 17.3px; letter-spacing: -.3px; }
.stats span { display: flex; align-items: center; justify-content: center; gap: 6px; }
.stats span + span { border-left: 1px solid #a3e8cb; }
.stats b { font-weight: 700; }
.actions { display: grid; grid-template-columns: 1fr auto 1fr; align-items: center; height: 60px; margin-top: 20px; }
.a-left { display: flex; }
.a-right { display: flex; justify-content: flex-end; gap: 10px; }
.btn { display: flex; align-items: center; justify-content: center; gap: 7px; height: 60px; padding: 0 28px; background: #fff; border: 1px solid #bdbde2; border-radius: 30px; color: #5e5e85; font-size: 20.8px; font-weight: 600; letter-spacing: -.25px; white-space: nowrap; }
.btn > svg { width: 8px; height: 12px; flex: none; }
.btn.settings { width: 272px; padding: 0 5px 0 0; gap: 8px; }
.btn.primary { background: #4a4cff; border-color: #4a4cff; color: #fff; width: 160px; padding: 0 0 0 2px; gap: 10px; }
.btn.wide { width: 190px; padding: 0; gap: 11px; }
.btn.reset { padding-right: 5px; }
.btn.blue { border: 1.5px solid #4a4cff; color: #4a4cff; gap: 9px; }
.btn > .b-ic { width: 19px; height: 20px; }
.btn.blue > .b-ic { width: 21px; height: 21px; }
.info { display: flex; margin-top: 30px; padding: 21px 16px 22px 22px; background: #e3e6fb; border: 1.5px solid #4a4cff; border-radius: 10px; color: #5557f0; font-size: 17.4px; line-height: 31px; letter-spacing: -.33px; }
.info-ic { width: 22px; height: 22px; flex: none; margin: 40px 16px 0 0; }
.note { margin-top: 8px; }
.info b { font-weight: 700; color: #4a4cff; letter-spacing: -.17px; }
.page-scroll { width: 15px; flex: none; position: relative; background: #f9f9fb; padding: 22px 4px 0 0; }
.thumb { height: 85px; width: 11px; border-radius: 6px; background: #8a8a8a; }
.up, .down { position: absolute; left: 1px; border-left: 6px solid transparent; border-right: 6px solid transparent; }
.up { top: 6px; border-bottom: 8px solid #777; }
.down { bottom: 5px; border-top: 8px solid #777; }

/* taskbar */
.taskbar { position: relative; display: flex; align-items: center; height: 60px; flex: none; background: linear-gradient(to right, #262626, #3a2423 35%, #33231f 55%, #3a2624 75%, #2a2a2a); color: #f0f0f0; font-size: 14px; border-top: 1px solid #3a3a3a; }
.weather { position: relative; display: flex; align-items: center; width: 392px; height: 100%; padding-left: 24px; flex: none; }
.w-ic { width: 30px; height: 36px; }
.w-badge { position: absolute; left: 39px; top: 8px; width: 20px; height: 20px; border-radius: 50%; background: #f8929c; color: #222; font-size: 13px; font-weight: 400; text-align: center; line-height: 20px; }
.w-text { display: flex; flex-direction: column; margin: -2px 0 0 10px; line-height: 20px; }
.w-text span + span { color: #d8d8d8; }
.start { width: 30px; height: 30px; flex: none; }
.tb-search { display: flex; align-items: center; width: 275px; height: 40px; margin-left: 16px; padding: 0 10px 0 15px; background: #4a4240; border-radius: 20px; font-size: 16px; color: #ddd; flex: none; }
.tb-search > svg:first-child { width: 20px; height: 20px; margin-right: 11px; }
.tb-search span { flex: 1; }
.bing { width: 52px; height: 30px; }
.apps-row { display: flex; margin-left: 2px; }
.app { position: relative; display: flex; align-items: center; justify-content: center; width: 55px; height: 50px; flex: none; }
.app > svg { width: 30px; height: 30px; }
.active-app { background: #453a38; border-radius: 5px; box-shadow: inset 0 0 0 1px #524846; }
.active-app > svg { width: 32px; height: 32px; }
.app.dot::after, .dot-blue::after { content: ""; position: absolute; bottom: 0; left: 50%; margin-left: -4px; width: 8px; height: 4px; border-radius: 2px; background: #999; }
.dot-blue::after { margin-left: -10px; width: 20px; background: #56c0f5; }
.over-av { position: absolute; left: 27px; top: 3px; width: 20px; height: 20px; border-radius: 50%; background: #5e6bc4; overflow: hidden; }
.over-av i:first-child { position: absolute; left: 6px; top: 4px; width: 8px; height: 8px; border-radius: 50%; background: #ccd2f0; }
.over-av i:last-child { position: absolute; left: 3px; top: 13px; width: 14px; height: 10px; border-radius: 50%; background: #ccd2f0; }
.over-dark { position: absolute; left: 32px; top: 6px; width: 15px; height: 15px; border-radius: 50%; background: #4b4744; }
.anth { width: 25px; height: 25px; border-radius: 5px; background: #fff; color: #111; font: 700 17px/25px "Liberation Sans", sans-serif; text-align: center; letter-spacing: -1px; }
.app-badge { position: absolute; left: 27px; top: 2px; width: 25px; height: 21px; border-radius: 11px; background: #4cb8f0; color: #111; font-size: 13px; font-weight: 400; text-align: center; line-height: 21px; }
.knot { color: #fff; }
.tray { margin-left: auto; display: flex; align-items: center; padding-right: 24px; }
.tray svg { flex: none; }
.tray-chev { width: 14px; height: 8px; }
.tray-net { width: 20px; height: 22px; margin-left: 24px; }
.tray-vol { width: 18px; height: 18px; margin-left: 9px; }
.tray-bat { width: 20px; height: 18px; margin-left: 12px; }
.clock { display: flex; flex-direction: column; align-items: flex-end; margin: -2px 0 0 21px; line-height: 20px; font-size: 14.4px; }
```
